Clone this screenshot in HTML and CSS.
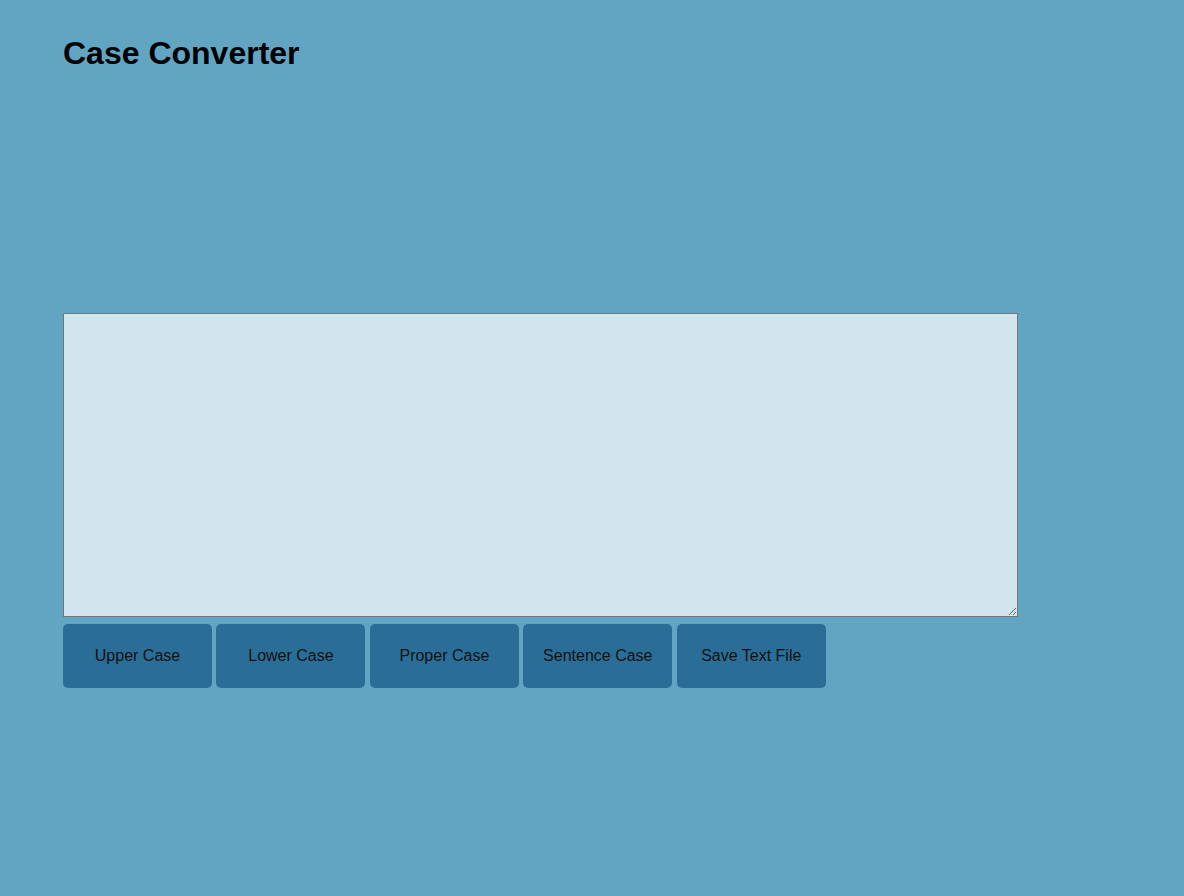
FILE: index.html
```html
<!DOCTYPE html>
<html>
<head>
<meta charset="utf-8">
<title>Case Converter</title>
<link rel="stylesheet" href="styles.css">
</head>
<body>
<div class="page">
  <h1 class="title">Case Converter</h1>
  <textarea class="input"></textarea>
  <div class="buttons">
    <button class="btn">Upper Case</button>
    <button class="btn">Lower Case</button>
    <button class="btn">Proper Case</button>
    <button class="btn">Sentence Case</button>
    <button class="btn">Save Text File</button>
  </div>
</div>
</body>
</html>
```
FILE: styles.css
```css
html, body {
  margin: 0;
  padding: 0;
  background: #61a5c3;
  font-family: "Liberation Sans", Arial, sans-serif;
}
.page {
  padding: 29px 0 0 63px;
  display: flex;
  flex-direction: column;
  align-items: flex-start;
}
.title {
  margin: 0;
  font-size: 32px;
  line-height: 48px;
  font-weight: bold;
  color: #000;
}
.input {
  margin-top: 236px;
  width: 955px;
  height: 304px;
  box-sizing: border-box;
  border: 1px solid #767676;
  background: #d2e5ec;
  padding: 2px;
  font-family: "Liberation Mono", monospace;
  font-size: 13px;
}
.buttons {
  margin-top: 7px;
  display: flex;
  gap: 4.45px;
}
.btn {
  width: 149px;
  height: 64px;
  border: none;
  border-radius: 5px;
  background: #2a6e97;
  color: #111;
  font-family: "Liberation Sans", Arial, sans-serif;
  font-size: 16px;
  padding: 0;
}
```
